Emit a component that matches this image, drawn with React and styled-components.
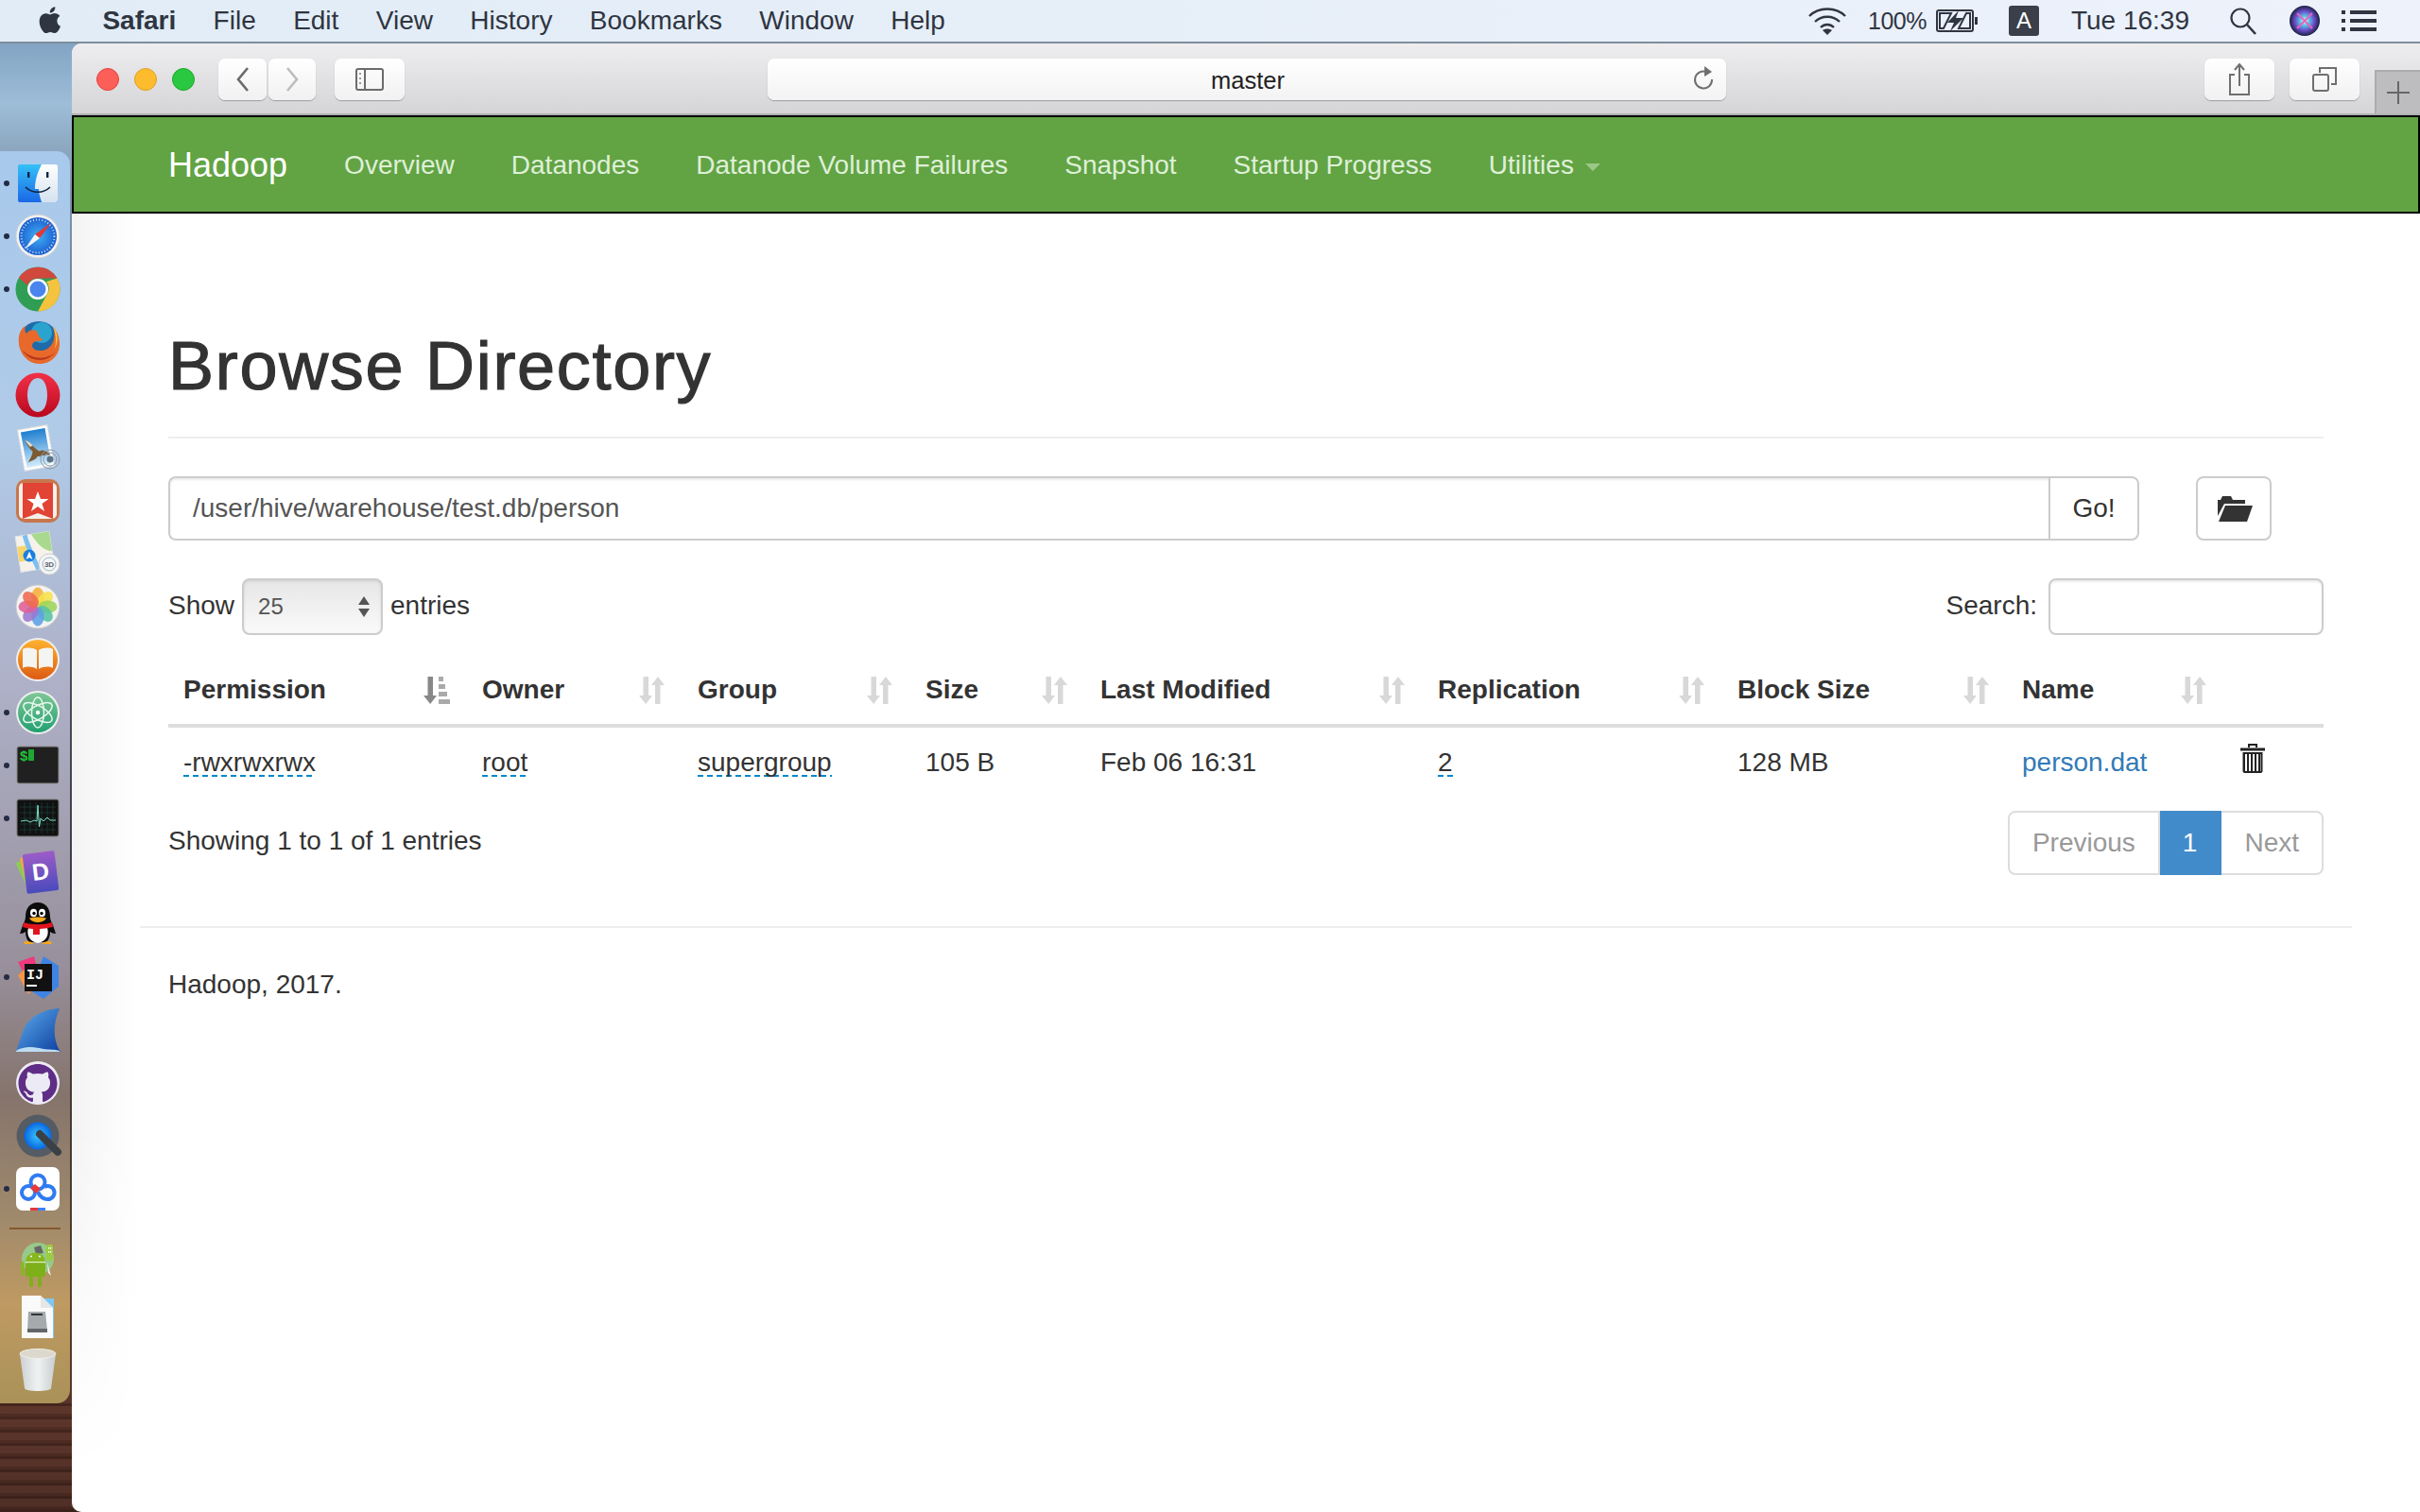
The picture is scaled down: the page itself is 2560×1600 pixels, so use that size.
import React from "react";
import styled, { createGlobalStyle } from "styled-components";

const Global = createGlobalStyle`
  html, body { margin: 0; padding: 0; background: #fff; }
  * { box-sizing: border-box; }
  body { font-family: "Liberation Sans", Arial, sans-serif; font-size: 28px; line-height: 40px; color: #333; }
`;

const Desktop = styled.div`
  width: 2560px; height: 1600px; overflow: hidden; display: flex; flex-direction: column;
  background:
    repeating-linear-gradient(180deg, rgba(30,12,8,.35) 0 3px, rgba(120,70,55,.12) 3px 11px, rgba(50,22,16,.22) 11px 14px) left bottom / 100% 115px no-repeat,
    linear-gradient(180deg, #6f93b4 0, #9dbdd8 110px, #7e94ab 200px, #4a4d5a 700px, #3c3640 1000px, #4b3c2e 1250px, #5a3429 1480px, #4a2c24 1600px);
`;
const MenuBar = styled.header`
  height: 46px; flex: none; display: flex; align-items: center; justify-content: space-between;
  padding: 0 46px 0 40px; color: #2f3541; background: linear-gradient(90deg, #e1ecf6, #edf2fb);
  border-bottom: 2px solid #7f8e9c; font-size: 28px; line-height: 44px;
`;
const MenuGroup = styled.nav`display: flex; align-items: center; gap: 39.4px;`;
const AppleWrap = styled.span`display: flex; margin-right: -1px; width: 30px; margin-top: -2px;`;
const MenuItem = styled.span`font-weight: ${p => (p.$bold ? 700 : 400)};`;
const StatusGroup = styled.div`display: flex; align-items: center;`;
const StatusText = styled.span`margin-left: ${p => p.$left}px; white-space: nowrap;`;
const BatteryText = styled.span`margin-left: 22px; white-space: nowrap; font-size: 25px; letter-spacing: -0.5px;`;
const StatusIcon = styled.svg`margin-left: ${p => p.$left}px; display: block; flex: none;`;
const InputBadge = styled.span`
  margin-left: 31px; width: 32px; height: 32px; border-radius: 3px; background: #3a3f49; color: #fff;
  font-size: 24px; line-height: 32px; text-align: center;
`;
const Body = styled.div`flex: 1; display: flex; min-height: 0;`;
const DockColumn = styled.div`width: 76px; flex: none; padding-top: 114px;`;
const Dock = styled.aside`
  width: 74px; height: 1325px; padding-top: 6px; border-radius: 0 14px 14px 0;
  background: linear-gradient(180deg, #a8c9ec 0, #b0cbe8 300px, #aeb1c8 560px, #98909c 860px, #85746c 1000px, #a08a6c 1130px, #bf9a62 1220px, #a99258 1325px);
`;
const DockItem = styled.div`
  position: relative; height: 56px; display: flex; align-items: center; justify-content: center; padding-left: 6px;
  &::before {
    content: ""; display: ${p => (p.$running ? "block" : "none")}; position: absolute; left: 4px; top: 25px;
    width: 6px; height: 6px; border-radius: 50%; background: #232c44;
  }
`;
const DockDivider = styled.div`height: 2px; margin: 13px 10px 9px 10px; background: #83592f;`;

const Browser = styled.main`
  flex: 1; min-width: 0; display: flex; flex-direction: column; margin-top: 0;
  border-radius: 10px 0 0 10px; overflow: hidden; background: #fff;
`;
const Toolbar = styled.div`
  height: 76px; flex: none; display: flex; padding: 16px 0 0 26px;
  background: linear-gradient(180deg, #eeedef, #d5d4d7); border-bottom: 2px solid #b2b1b3;
`;
const Lights = styled.div`display: flex; gap: 16px; align-items: center; height: 44px; margin-right: 25px;`;
const Light = styled.span`
  width: 24px; height: 24px; border-radius: 50%; background: ${p => p.$color}; border: 1px solid ${p => p.$edge};
`;
const ToolButton = styled.div`
  width: ${p => p.$w}px; height: 44px; margin-left: ${p => p.$left || 0}px; flex: none;
  display: flex; align-items: center; justify-content: center; border-radius: 7px;
  background: linear-gradient(180deg, #fff, #f1f1f1); box-shadow: 0 1px 1px rgba(0,0,0,.28);
`;
const Address = styled.div`
  width: 1014px; height: 44px; margin-left: 384px; flex: none; margin-right: auto; padding: 0 12px 0 0;
  display: flex; align-items: center; justify-content: flex-end; position: relative; border-radius: 7px;
  background: linear-gradient(180deg, #fff, #f3f3f3); box-shadow: 0 1px 1px rgba(0,0,0,.28);
`;
const AddressText = styled.span`
  position: absolute; left: 2px; right: 0; top: 1px; text-align: center; font-size: 25.5px; color: #222; line-height: 44px;
`;
const NewTab = styled.div`
  width: 48px; height: 46px; margin: 12px 0 0 16px; flex: none; display: flex; align-items: center; justify-content: center;
  background: #bdbcbf; border-left: 2px solid #acabae; border-top: 2px solid #acabae;
`;
const Navbar = styled.nav`
  height: 104px; flex: none; display: flex; align-items: center; padding: 2px 0 0 100px; gap: 60px;
  background: #62a344; border: 2px solid #000;
`;
const Brand = styled.span`font-size: 36px; color: #fff;`;
const NavLink = styled.span`color: #dff0d8; font-size: 28px; display: flex; align-items: center;`;
const Caret = styled.span`
  margin-left: 12px; margin-top: 4px; width: 0; height: 0; border-left: 8px solid transparent; border-right: 8px solid transparent;
  border-top: 8px solid #9cc886;
`;
const Page = styled.div`
  flex: 1; padding: 0 102px; position: relative;
  &::before {
    content: ""; position: absolute; left: 0; top: 0; bottom: 0; width: 70px; pointer-events: none;
    background: linear-gradient(90deg, #f3f3f3, #fff);
    -webkit-mask-image: linear-gradient(180deg, #000 70%, transparent 97%);
  }
`;
const Content = styled.div`position: relative;`;
const Title = styled.h1`
  margin: 121px 0 0; padding-bottom: 35px; border-bottom: 2px solid #eee; font-size: 72px; line-height: 80px; font-weight: 400; color: #333;
  letter-spacing: 1.7px; -webkit-text-stroke: 1.2px #333;
`;
const PathRow = styled.div`display: flex; margin-top: 40px; height: 68px;`;
const PathInput = styled.input`
  flex: 1; min-width: 0; height: 68px; padding: 0 24px; border: 2px solid #ccc; border-right: 0; border-radius: 8px 0 0 8px;
  font: 28px "Liberation Sans", Arial, sans-serif; color: #555; outline: none; box-shadow: inset 0 2px 2px rgba(0,0,0,.075); background: #fff;
`;
const GoButton = styled.div`
  width: 96px; height: 68px; flex: none; border: 2px solid #ccc; border-radius: 0 8px 8px 0; display: flex; align-items: center; justify-content: center;
`;
const FolderButton = styled.div`
  width: 80px; height: 68px; margin-left: 60px; margin-right: 55px; flex: none; border: 2px solid #ccc; border-radius: 8px; padding-left: 3px;
  display: flex; align-items: center; justify-content: center;
`;
const FilterRow = styled.div`display: flex; justify-content: space-between; margin-top: 40px; height: 60px; align-items: center;`;
const FilterGroup = styled.div`display: flex; align-items: center; gap: ${p => p.$gap}px;`;
const FilterLabel = styled.span`margin-top: -2px;`;
const SelectBox = styled.div`
  width: 149px; height: 60px; padding: 0 12px 0 15px; border: 2px solid #ccc; border-radius: 8px; display: flex; align-items: center; justify-content: space-between;
  background: linear-gradient(180deg, #e6e6e6, #fafafa); color: #555; font-size: 24px; box-shadow: inset 0 1px 3px rgba(0,0,0,.1);
`;
const SearchBox = styled.input`
  width: 291px; height: 60px; border: 2px solid #ccc; border-radius: 8px; outline: none; box-shadow: inset 0 2px 2px rgba(0,0,0,.075); background: #fff;
`;
const Table = styled.table`width: 2280px; border-spacing: 0; table-layout: fixed;`;
const Th = styled.th`
  padding: 38px 18px 16px 16px; border-bottom: 4px solid #ddd; text-align: left; font-weight: 700; font-size: 28px; line-height: 40px;
`;
const ThInner = styled.div`display: flex; align-items: center; justify-content: space-between;`;
const Td = styled.td`padding: 17px 16px 15px; font-size: 28px; line-height: 40px; vertical-align: top;`;
const TrashCell = styled.td`padding: 17px 0 0 17px; vertical-align: top;`;
const Dotted = styled.span`
  background: repeating-linear-gradient(90deg, #0088cc 0 6px, transparent 6px 10px) left bottom / 100% 2px no-repeat;
`;
const FileLink = styled.span`color: #337ab7;`;
const InfoRow = styled.div`display: flex; justify-content: space-between; align-items: flex-start; margin-top: 16px;`;
const Info = styled.div`margin-top: 12px;`;
const Pager = styled.div`display: flex; height: 68px;`;
const PageCell = styled.div`
  height: 68px; padding: 0 ${p => p.$pad}px; display: flex; align-items: center; color: ${p => (p.$active ? "#fff" : "#999")};
  background: ${p => (p.$active ? "#428bca" : "#fff")}; border: 2px solid ${p => (p.$active ? "#428bca" : "#ddd")};
  border-left-width: ${p => (p.$first ? 2 : 0)}px; border-radius: ${p => p.$radius || 0};
`;
const FooterRule = styled.hr`margin: 54px -30px 0; height: 2px; border: 0; background: #eee;`;
const Footer = styled.p`margin: 40px 0 0;`;

const Glyph = ({ children, size = 48, box = 48 }) => (
  <svg width={size} height={size} viewBox={`0 0 ${box} ${box}`} style={{ display: "block", overflow: "visible" }}>{children}</svg>
);

const Finder = () => (
  <Glyph>
    <defs>
      <linearGradient id="fb" x1="0" y1="0" x2="0" y2="1"><stop offset="0" stopColor="#35c0f8" /><stop offset="1" stopColor="#1a68e6" /></linearGradient>
      <linearGradient id="fw" x1="0" y1="0" x2="0" y2="1"><stop offset="0" stopColor="#fff" /><stop offset="1" stopColor="#d5e2ef" /></linearGradient>
    </defs>
    <rect x="3" y="4" width="42" height="40" rx="2" fill="url(#fb)" />
    <path d="M28 4 H43 a2 2 0 0 1 2 2 V42 a2 2 0 0 1 -2 2 H28 C26 38 25 34 25 30 H21 C21 20 24 12 28 4Z" fill="url(#fw)" />
    <rect x="13" y="12" width="2.4" height="6" fill="#10243f" /><rect x="33" y="12" width="2.4" height="6" fill="#10243f" />
    <path d="M11 28 C18 35 30 35 37 28" stroke="#10243f" strokeWidth="1.6" fill="none" />
  </Glyph>
);
const Safari = () => (
  <Glyph>
    <defs><radialGradient id="sa"><stop offset="0" stopColor="#3fb0f5" /><stop offset="1" stopColor="#1c5fcf" /></radialGradient></defs>
    <circle cx="24" cy="24" r="23" fill="#f2f2f2" stroke="#cfcfcf" />
    <circle cx="24" cy="24" r="20" fill="url(#sa)" />
    <circle cx="24" cy="24" r="17.5" fill="none" stroke="#cfe4fa" strokeWidth="2" strokeDasharray="1 2.2" />
    <path d="M38 10 L21 22 L26 26Z" fill="#e8362f" /><path d="M10 38 L21 22 L26 26Z" fill="#f5f5f5" />
  </Glyph>
);
const Chrome = () => (
  <Glyph>
    <circle cx="24" cy="24" r="23.5" fill="#2f9e54" />
    <path d="M4 12 A23.5 23.5 0 0 1 44.5 12.5 L24 12.5 A11.5 11.5 0 0 0 13 20Z" fill="#d1483d" />
    <path d="M44.5 12.5 A23.5 23.5 0 0 1 24 47.5 L34 29 A11.5 11.5 0 0 0 33 16Z M24 12.5 H44.5" fill="#f5c33e" />
    <circle cx="24" cy="24" r="11" fill="#fff" /><circle cx="24" cy="24" r="8.5" fill="#4a84ee" />
  </Glyph>
);
const Firefox = () => (
  <Glyph>
    <circle cx="25" cy="23" r="21" fill="#1f6aa8" />
    <circle cx="28" cy="14" r="11" fill="#2ba3cf" />
    <path d="M4 18 C2 34 12 47 26 47 C38 47 47 38 47 26 C47 18 44 12 40 8 C44 18 40 32 28 33 C20 34 15 28 20 24 C24 22 28 24 29 21 C25 19 24 15 23 12 C17 10 14 12 12 15 C10 13 10 10 11 7 C7 9 5 13 4 18Z" fill="#e8692a" />
    <path d="M8 33 C14 44 33 48 43 34 C36 42 20 44 8 33Z" fill="#b8361c" />
    <path d="M40 8 C46 14 46 24 42 31 C44 22 43 15 40 8Z" fill="#f8c43c" />
  </Glyph>
);
const Opera = () => (
  <Glyph>
    <defs><linearGradient id="op" x1="0" y1="0" x2="0" y2="1"><stop offset="0" stopColor="#f33148" /><stop offset="1" stopColor="#b8081e" /></linearGradient></defs>
    <path fillRule="evenodd" d="M24 .5 A23.5 23.5 0 1 0 24 47.5 A23.5 23.5 0 1 0 24 .5Z M24 6 C31 6 34 15 34 24 C34 33 31 42 24 42 C17 42 13 33 13 24 C13 15 17 6 24 6Z" fill="url(#op)" />
  </Glyph>
);
const MailStamp = () => (
  <Glyph>
    <defs><linearGradient id="ms" x1="0" y1="0" x2="0" y2="1"><stop offset="0" stopColor="#1f7fd0" /><stop offset="1" stopColor="#d2ecfa" /></linearGradient></defs>
    <g transform="rotate(-10 22 24)">
      <rect x="6" y="2" width="32" height="44" fill="#fff" stroke="#d6d6d6" strokeWidth="1.5" strokeDasharray="2 1.6" />
      <rect x="9" y="5" width="26" height="38" fill="url(#ms)" />
      <path d="M12 14 C18 18 20 24 25 28 C29 26 34 30 36 34 C30 32 26 34 22 33 C20 37 15 36 11 38 C14 34 17 31 18 27 C15 23 13 19 12 14Z" fill="#7c5a32" />
      <path d="M12 14 C15 15 18 18 19 21 L16 22Z" fill="#e0dcc8" />
    </g>
    <circle cx="37" cy="36" r="10" fill="none" stroke="#8c9aa8" strokeWidth="1" /><circle cx="37" cy="36" r="7" fill="none" stroke="#8c9aa8" strokeWidth="1" />
    <circle cx="37" cy="36" r="3.5" fill="#5e7286" />
  </Glyph>
);
const Wunderlist = () => (
  <Glyph>
    <rect x="1" y="1" width="46" height="46" rx="10" fill="#c8764c" />
    <rect x="4" y="5" width="40" height="38" rx="5" fill="#f4efe8" />
    <path d="M8 5 H40 V43 L24 37 L8 43Z" fill="#e14334" />
    <path d="M24 14 L27 22 L35.5 22 L28.5 27 L31 35 L24 30 L17 35 L19.5 27 L12.5 22 L21 22Z" fill="#fff" />
  </Glyph>
);
const MapsIcon = () => (
  <Glyph>
    <g transform="rotate(-9 20 22)">
      <rect x="3" y="3" width="36" height="38" fill="#f6f2ea" stroke="#e5e5e5" />
      <path d="M20 3 H39 V24 C31 23 25 15 20 3Z" fill="#a9d98e" />
      <path d="M3 14 H13 V30 H3Z" fill="#f6d56a" />
      <path d="M13 3 C14 14 18 28 22 41" stroke="#7cc0f2" strokeWidth="5" fill="none" />
    </g>
    <circle cx="15" cy="26" r="6.5" fill="#1a7fe0" /><path d="M15 21.5 L18.5 30 L15 28 L11.5 30Z" fill="#fff" />
    <circle cx="36" cy="35" r="11" fill="#f5f5f5" stroke="#cfcfcf" />
    <circle cx="36" cy="35" r="7" fill="none" stroke="#9ab8c8" />
    <text x="36" y="38" textAnchor="middle" fontSize="8" fontWeight="700" fontFamily="Liberation Sans" fill="#5a6570">3D</text>
  </Glyph>
);
const Photos = () => (
  <Glyph>
    <circle cx="24" cy="24" r="23" fill="#f2f2f2" stroke="#c9c9c9" />
    {["#f6b03b", "#f8e04a", "#9cd45a", "#55c3a4", "#5c9fe6", "#9a78cf", "#de5e98", "#ee6a50"].map((c, i) => (
      <ellipse key={c} cx="24" cy="13.5" rx="6.6" ry="10" fill={c} fillOpacity=".88" transform={`rotate(${i * 45} 24 24)`} />
    ))}
  </Glyph>
);
const Books = () => (
  <Glyph>
    <defs><linearGradient id="bk" x1="0" y1="0" x2="0" y2="1"><stop offset="0" stopColor="#fdb22e" /><stop offset="1" stopColor="#dd5b13" /></linearGradient></defs>
    <circle cx="24" cy="24" r="23" fill="#efefef" /><circle cx="24" cy="24" r="21" fill="url(#bk)" />
    <path d="M23 14 C18 11 12 11 8 13 V33 C12 31 18 31 23 34Z M25 14 C30 11 36 11 40 13 V33 C36 31 30 31 25 34Z" fill="#f4f4f2" />
  </Glyph>
);
const Atom = () => (
  <Glyph>
    <defs><linearGradient id="at" x1="0" y1="0" x2="0" y2="1"><stop offset="0" stopColor="#7fc796" /><stop offset="1" stopColor="#22a071" /></linearGradient></defs>
    <circle cx="24" cy="24" r="23" fill="#efefef" /><circle cx="24" cy="24" r="21" fill="url(#at)" />
    <g fill="none" stroke="#e8f8ee" strokeWidth="1.5">
      <ellipse cx="24" cy="24" rx="17" ry="7" transform="rotate(30 24 24)" />
      <ellipse cx="24" cy="24" rx="17" ry="7" transform="rotate(-30 24 24)" />
      <ellipse cx="24" cy="24" rx="16" ry="6.5" transform="rotate(90 24 24)" />
    </g>
    <circle cx="24" cy="24" r="2.2" fill="#fff" />
  </Glyph>
);
const Terminal = () => (
  <Glyph>
    <rect x="2" y="4" width="44" height="39" rx="2" fill="#202020" stroke="#8a8a8a" />
    <text x="5" y="19" fontSize="15" fontWeight="700" fontFamily="Liberation Sans" fill="#22c43a">$</text>
    <rect x="14" y="7" width="6" height="12" fill="#1fa833" />
  </Glyph>
);
const Activity = () => (
  <Glyph>
    <rect x="2" y="4" width="44" height="39" rx="2" fill="#111" stroke="#777" />
    <g stroke="#1f4a42" strokeWidth=".6">
      {[10, 16, 22, 28, 34, 40].map(x => <line key={x} x1={x} y1="7" x2={x} y2="40" />)}
      {[12, 18, 24, 30, 36].map(y => <line key={y} x1="5" y1={y} x2="43" y2={y} />)}
    </g>
    <path d="M6 27 L12 26 L16 28 L20 26 L23 27 L24 10 L25.5 33 L27 24 L30 27 L34 23 L37 26 L43 26" stroke="#7fe0cc" strokeWidth="1" fill="none" />
  </Glyph>
);
const Dash = () => (
  <Glyph>
    <rect x="6" y="8" width="26" height="32" rx="2" fill="#8ccc55" transform="rotate(-26 19 24)" />
    <rect x="9" y="6" width="27" height="34" rx="2" fill="#f2a44e" transform="rotate(-16 22 24)" />
    <defs><linearGradient id="da" x1="0" y1="0" x2="0" y2="1"><stop offset="0" stopColor="#9c5cc8" /><stop offset="1" stopColor="#4a4bbc" /></linearGradient></defs>
    <rect x="10" y="4" width="34" height="42" rx="2" fill="url(#da)" transform="rotate(-7 27 25)" />
    <text x="27" y="33" textAnchor="middle" fontSize="25" fontWeight="700" fontFamily="Liberation Sans" fill="#fff" transform="rotate(-7 27 25)">D</text>
  </Glyph>
);
const QQ = () => (
  <Glyph>
    <path d="M24 1 C33 1 37 8 37 16 C37 20 39 22 40 25 L43 34 C40 34 39 33 37 32 C37 38 35 41 33 43 H15 C13 41 11 38 11 32 C9 33 8 34 5 34 L8 25 C9 22 11 20 11 16 C11 8 15 1 24 1Z" fill="#0c0c0c" />
    <path d="M14 28 H34 C36 34 34 42 24 44 C14 42 12 34 14 28Z" fill="#fafafa" />
    <ellipse cx="19.5" cy="12" rx="3.5" ry="4.2" fill="#fff" /><ellipse cx="28.5" cy="12" rx="3.5" ry="4.2" fill="#fff" />
    <circle cx="20" cy="12.5" r="1.7" fill="#000" /><circle cx="28" cy="12.5" r="1.7" fill="#000" />
    <path d="M15 17.5 C20 16 28 16 33 17.5 C31 21 27 22 24 22 C21 22 17 21 15 17.5Z" fill="#f4a81c" />
    <path d="M9 22 C17 25 31 25 39 22 L40 27 C34 28 29 29 26 29 V35 H19 V29 C16 29 12 28 8 27Z" fill="#e1141d" />
    <path d="M9 43 C12 41 17 42 20 45 H10Z M39 43 C36 41 31 42 28 45 H38Z" fill="#f4a81c" />
  </Glyph>
);
const Idea = () => (
  <Glyph>
    <path d="M20 2 L3 8 L12 26 L4 22 L14 40 L28 32Z" fill="#ee3a7c" />
    <path d="M3 22 L14 12 L20 36 L14 42Z" fill="#f69447" />
    <path d="M30 2 L46 12 L46 34 L30 47 L16 38Z" fill="#3f83e4" />
    <path d="M14 40 L22 26 L26 34Z" fill="#9d4db8" />
    <rect x="10" y="10" width="29" height="29" fill="#111" />
    <text x="12" y="26" fontSize="15" fontWeight="700" fontFamily="Liberation Mono" fill="#fff">IJ</text>
    <rect x="12" y="32" width="11" height="2" fill="#fff" />
  </Glyph>
);
const Wireshark = () => (
  <Glyph>
    <defs><linearGradient id="ws" x1="0" y1="0" x2="1" y2="1"><stop offset="0" stopColor="#5fb0f2" /><stop offset="1" stopColor="#0d3f9e" /></linearGradient></defs>
    <path d="M47 1 C30 2 14 10 9 24 C6 32 3 40 1 47 H48 C42 38 38 22 47 1Z" fill="url(#ws)" />
    <path d="M1 46 C10 40 22 42 30 44 C36 45 42 44 47 46 V47 H1Z" fill="#bcdcf2" />
  </Glyph>
);
const GitHubDesktop = () => (
  <Glyph>
    <circle cx="24" cy="24" r="23" fill="#eceaf4" />
    <g transform="translate(3.5 3.5) scale(1.71)">
      <path fill="#5f2d85" d="M12 .297c-6.63 0-12 5.373-12 12 0 5.303 3.438 9.8 8.205 11.385.6.113.82-.258.82-.577 0-.285-.01-1.04-.015-2.04-3.338.724-4.042-1.61-4.042-1.61C4.422 18.07 3.633 17.7 3.633 17.7c-1.087-.744.084-.729.084-.729 1.205.084 1.838 1.236 1.838 1.236 1.07 1.835 2.809 1.305 3.495.998.108-.776.417-1.305.76-1.605-2.665-.3-5.466-1.332-5.466-5.93 0-1.31.465-2.38 1.235-3.22-.135-.303-.54-1.523.105-3.176 0 0 1.005-.322 3.3 1.23.96-.267 1.98-.399 3-.405 1.02.006 2.04.138 3 .405 2.28-1.552 3.285-1.23 3.285-1.23.645 1.653.24 2.873.12 3.176.765.84 1.23 1.91 1.23 3.22 0 4.61-2.805 5.625-5.475 5.92.42.36.81 1.096.81 2.22 0 1.606-.015 2.896-.015 3.286 0 .315.21.69.825.57C20.565 22.092 24 17.592 24 12.297c0-6.627-5.373-12-12-12" />
    </g>
  </Glyph>
);
const QuickTime = () => (
  <Glyph>
    <defs><radialGradient id="qt"><stop offset="0" stopColor="#38c8ff" /><stop offset="1" stopColor="#0a66e0" /></radialGradient></defs>
    <circle cx="24" cy="24" r="22.5" fill="#555b63" /><circle cx="24" cy="24" r="14.5" fill="url(#qt)" />
    <path d="M26 22 L45 41" stroke="#3b4046" strokeWidth="8" strokeLinecap="round" />
  </Glyph>
);
const BaiduCloud = () => (
  <Glyph>
    <rect x="1" y="1" width="46" height="46" rx="7" fill="#fff" />
    <g fill="none" stroke="#2f7bf0" strokeWidth="4">
      <circle cx="24" cy="17" r="7.5" /><circle cx="14" cy="28" r="7" /><path d="M24 27 C26 33 31 35 34 35 A7 7 0 1 0 31 22" />
    </g>
    <path d="M21 19 L27 24 L22 29 L16 23Z" fill="#e53a3a" />
    <rect x="16" y="44" width="8" height="3" fill="#e53a3a" /><rect x="24" y="44" width="8" height="3" fill="#3b82f0" />
  </Glyph>
);
const AndroidTool = () => (
  <Glyph>
    <circle cx="24" cy="18" r="17" fill="#97c98a" />
    <path d="M20 6 L27 4 L30 12 L22 13Z" fill="#666" />
    <rect x="33" y="3" width="7" height="17" rx="2" fill="#9ccc40" />
    <g fill="#fff"><rect x="35" y="6" width="1.2" height="1.6" /><rect x="37" y="6" width="1.2" height="1.6" /><rect x="35" y="10" width="1.2" height="1.6" /><rect x="37" y="10" width="1.2" height="1.6" /></g>
    <path d="M11 21 A10.500 9.500 0 0 1 32 21Z" fill="#86b81e" />
    <rect x="11" y="22" width="21" height="15" rx="2" fill="#7eb01a" />
    <rect x="11" y="21" width="21" height="1.200" fill="#e4eecc" />
    <rect x="6" y="21" width="3.500" height="15" rx="1.700" fill="#86b81e" />
    <path d="M34 22 L38 36 L35 33Z" fill="#f0f0e8" />
    <rect x="15" y="36" width="4" height="12" rx="2" fill="#7eb01a" /><rect x="24" y="36" width="4" height="12" rx="2" fill="#7eb01a" />
    <circle cx="17" cy="15.500" r="1" fill="#fff" /><circle cx="26" cy="15.500" r="1" fill="#fff" />
  </Glyph>
);
const DiskDoc = () => (
  <Glyph>
    <path d="M12 4 H41 V46 H12Z" fill="#7bc8f4" />
    <path d="M7 1 H27 L40 14 V46 H7Z" fill="#fafafa" /><path d="M27 1 L40 14 H27Z" fill="#e6e6e6" />
    <path d="M14 18 H32 L34 38 H13Z" fill="#a6aaac" /><rect x="13" y="36" width="21" height="4" fill="#62666a" />
    <rect x="17" y="20" width="12" height="2" fill="#333" />
  </Glyph>
);
const Bin = () => (
  <Glyph>
    <defs><linearGradient id="bn" x1="0" y1="0" x2="1" y2="0"><stop offset="0" stopColor="#ccd0d2" /><stop offset=".5" stopColor="#f0f2f2" /><stop offset="1" stopColor="#c9cdd0" /></linearGradient></defs>
    <path d="M5 7 L10 43 C10 47 38 47 38 43 L43 7Z" fill="url(#bn)" />
    <ellipse cx="24" cy="6.5" rx="19" ry="5" fill="#dcd8ce" stroke="#f0eee8" />
  </Glyph>
);

const dockGroupA = [
  [Finder, 1], [Safari, 1], [Chrome, 1], [Firefox, 0], [Opera, 0], [MailStamp, 0], [Wunderlist, 0], [MapsIcon, 0], [Photos, 0], [Books, 0],
  [Atom, 1], [Terminal, 1], [Activity, 1], [Dash, 0], [QQ, 0], [Idea, 1], [Wireshark, 0], [GitHubDesktop, 0], [QuickTime, 0], [BaiduCloud, 1],
];
const dockGroupB = [AndroidTool, DiskDoc, Bin];

const SortIcon = ({ sorted }) => (
  <svg width="28" height="29" viewBox="0 0 28 29" style={{ display: "block", flex: "none" }}>
    <path d="M4.5 0 H10 V20 H14 L7.2 29 L0 20 H4.5Z" fill={sorted ? "#888" : "#d8d8d8"} />
    {sorted ? (
      <g fill="#aaa"><rect x="16" y="0" width="5" height="5" /><rect x="16" y="8" width="7" height="5" /><rect x="16" y="16" width="9" height="5" /><rect x="16" y="24" width="12" height="5" /></g>
    ) : (
      <path d="M17 29 H22.5 V9 H27 L20 0 L13 9 H17Z" fill="#d8d8d8" />
    )}
  </svg>
);
const FolderOpen = () => (
  <svg width="37" height="27" viewBox="0 0 37 27" style={{ display: "block" }}>
    <path d="M0 4 H3 L5 0 H14 L16 4 H29 V8 H7 L0 21Z" fill="#333" />
    <path d="M8 10 H37 L31 27 H1Z" fill="#333" />
  </svg>
);
const TrashGlyph = () => (
  <svg width="26" height="31" viewBox="0 0 26 31" style={{ display: "block" }}>
    <path d="M9 4 V1 H17 V4" stroke="#222" strokeWidth="2" fill="none" />
    <rect x="0" y="4.5" width="26" height="3" fill="#222" />
    <path fillRule="evenodd" d="M2.5 9 H23.5 V29 C23.5 30 22.5 31 21.5 31 H4.500 C3.500 31 2.500 30 2.500 29Z M5 11 V29 H7 V11Z M9 11 V29 H11 V11Z M13 11 V29 H15 V11Z M17 11 V29 H19 V11Z M21 11 V29 H21.500 V11Z" fill="#222" />
  </svg>
);

const columns = [
  ["Permission", 316, true], ["Owner", 228], ["Group", 241], ["Size", 185], ["Last Modified", 357], ["Replication", 317], ["Block Size", 301], ["Name", 230],
];

export default function App() {
  return (
    <Desktop>
      <Global />
      <MenuBar>
        <MenuGroup>
          <AppleWrap>
            <svg width="28" height="32" viewBox="0 0 24 28"><path fill="#2f3541" d="M17.6 14.9c0-3 2.500-4.500 2.600-4.500-1.400-2.100-3.600-2.400-4.400-2.400-1.900-.2-3.700 1.100-4.600 1.100-1 0-2.400-1.100-4-1-2 0-3.900 1.200-5 3-2.100 3.700-.5 9.200 1.500 12.200 1 1.500 2.200 3.100 3.800 3 1.500-.1 2.100-1 3.900-1s2.400 1 4 1 2.700-1.500 3.700-2.900c1.200-1.700 1.600-3.300 1.700-3.400-.1 0-3.200-1.200-3.200-5.100zM14.600 5.900c.8-1 1.400-2.400 1.200-3.900-1.200 0-2.700.8-3.600 1.800-.8.900-1.500 2.300-1.300 3.700 1.400.1 2.800-.7 3.700-1.600z" /></svg>
          </AppleWrap>
          <MenuItem $bold>Safari</MenuItem>
          {["File", "Edit", "View", "History", "Bookmarks", "Window", "Help"].map(m => <MenuItem key={m}>{m}</MenuItem>)}
        </MenuGroup>
        <StatusGroup>
          <StatusIcon $left={0} width="42" height="30" viewBox="0 0 42 30">
            <g fill="none" stroke="#2f3541" strokeWidth="2.400"><path d="M2 10 C12 0 30 0 40 10" /><path d="M8 16 C15 9 27 9 34 16" /><path d="M14 22 C18 18 24 18 28 22" /></g>
            <path d="M21 30 L16 25 C19 23 23 23 26 25Z" fill="#2f3541" />
          </StatusIcon>
          <BatteryText>100%</BatteryText>
          <StatusIcon $left={10} width="46" height="24" viewBox="0 0 46 24">
            <rect x="1" y="1" width="38" height="22" rx="2" fill="none" stroke="#2f3541" strokeWidth="2" />
            <rect x="41" y="8" width="3" height="8" fill="#2f3541" />
            <path d="M4 4 H16 L8 20 H4Z M36 4 V20 H24 L32 4Z" fill="none" stroke="#2f3541" strokeWidth="2" />
            <path d="M24 1 L12 14 H19 L15 23 L29 9 H21Z" fill="#2f3541" />
          </StatusIcon>
          <InputBadge>A</InputBadge>
          <StatusText $left={34}>Tue 16:39</StatusText>
          <StatusIcon $left={42} width="30" height="30" viewBox="0 0 30 30">
            <circle cx="12" cy="12" r="9.500" fill="none" stroke="#2f3541" strokeWidth="2.200" /><path d="M19 19 L28 29" stroke="#2f3541" strokeWidth="2.600" />
          </StatusIcon>
          <StatusIcon $left={34} width="32" height="32" viewBox="0 0 32 32">
            <defs><radialGradient id="si"><stop offset="0" stopColor="#fff" /><stop offset=".3" stopColor="#58c6e8" /><stop offset=".65" stopColor="#6a4bc8" /><stop offset="1" stopColor="#1b2140" /></radialGradient></defs>
            <circle cx="16" cy="16" r="16" fill="url(#si)" />
            <path d="M8 8 L24 24 M24 8 L8 24" stroke="#e566b8" strokeWidth="2" />
          </StatusIcon>
          <StatusIcon $left={23} width="37" height="22" viewBox="0 0 37 22">
            <g fill="#2f3541"><rect x="0" y="0" width="4" height="4" /><rect x="9" y="0" width="28" height="4" /><rect x="0" y="9" width="4" height="4" /><rect x="9" y="9" width="28" height="4" /><rect x="0" y="18" width="4" height="4" /><rect x="9" y="18" width="28" height="4" /></g>
          </StatusIcon>
        </StatusGroup>
      </MenuBar>
      <Body>
        <DockColumn>
          <Dock>
            {dockGroupA.map(([Icon, running], i) => (
              <DockItem key={i} $running={!!running}><Icon /></DockItem>
            ))}
            <DockDivider />
            {dockGroupB.map((Icon, i) => <DockItem key={i}><Icon /></DockItem>)}
          </Dock>
        </DockColumn>
        <Browser>
          <Toolbar>
            <Lights>
              <Light $color="#fc5f57" $edge="#e0443e" />
              <Light $color="#fdbc2e" $edge="#dea123" />
              <Light $color="#2ac840" $edge="#1aab29" />
            </Lights>
            <ToolButton $w={51}>
              <svg width="16" height="28" viewBox="0 0 16 28"><path d="M13 2 L3 14 L13 26" fill="none" stroke="#6b6b6b" strokeWidth="2.600" /></svg>
            </ToolButton>
            <ToolButton $w={50} $left={2}>
              <svg width="16" height="28" viewBox="0 0 16 28"><path d="M3 2 L13 14 L3 26" fill="none" stroke="#bdbdbd" strokeWidth="2.600" /></svg>
            </ToolButton>
            <ToolButton $w={74} $left={20}>
              <svg width="30" height="24" viewBox="0 0 30 24"><rect x="1" y="1" width="28" height="22" rx="2" fill="none" stroke="#6b6b6b" strokeWidth="2" /><rect x="9" y="1" width="2" height="22" fill="#6b6b6b" /><g fill="#999"><rect x="4" y="5" width="2" height="2" /><rect x="4" y="10" width="2" height="2" /><rect x="4" y="15" width="2" height="2" /></g></svg>
            </ToolButton>
            <Address>
              <AddressText>master</AddressText>
              <svg width="24" height="28" viewBox="0 0 24 28" style={{ position: "relative" }}><path d="M15 6 A9 9 0 1 0 21 14" fill="none" stroke="#6f6f6f" strokeWidth="2" /><path d="M13 0 L21 6 L13 11Z" fill="#6f6f6f" /></svg>
            </Address>
            <ToolButton $w={74}>
              <svg width="24" height="34" viewBox="0 0 24 34"><path d="M7 12 H2 V33 H22 V12 H17 M12 24 V2 M7 7 L12 1 L17 7" fill="none" stroke="#6f6f6f" strokeWidth="2" /></svg>
            </ToolButton>
            <ToolButton $w={74} $left={16}>
              <svg width="26" height="26" viewBox="0 0 26 26"><rect x="1" y="8" width="16" height="17" rx="2" fill="none" stroke="#6f6f6f" strokeWidth="2" /><path d="M8 6 V1 H25 V18 H20" fill="none" stroke="#6f6f6f" strokeWidth="2" /></svg>
            </ToolButton>
            <NewTab>
              <svg width="24" height="24" viewBox="0 0 24 24"><path d="M12 0 V24 M0 12 H24" stroke="#666" strokeWidth="2" /></svg>
            </NewTab>
          </Toolbar>
          <Navbar>
            <Brand>Hadoop</Brand>
            {["Overview", "Datanodes", "Datanode Volume Failures", "Snapshot", "Startup Progress"].map(n => <NavLink key={n}>{n}</NavLink>)}
            <NavLink>Utilities<Caret /></NavLink>
          </Navbar>
          <Page>
            <Content>
              <Title>Browse Directory</Title>
              <PathRow>
                <PathInput readOnly value="/user/hive/warehouse/test.db/person" />
                <GoButton>Go!</GoButton>
                <FolderButton><FolderOpen /></FolderButton>
              </PathRow>
              <FilterRow>
                <FilterGroup $gap={8}>
                  <FilterLabel>Show</FilterLabel>
                  <SelectBox>
                    <span>25</span>
                    <svg width="12" height="22" viewBox="0 0 12 22"><path d="M6 0 L12 9 H0Z M6 22 L12 13 H0Z" fill="#555" /></svg>
                  </SelectBox>
                  <FilterLabel>entries</FilterLabel>
                </FilterGroup>
                <FilterGroup $gap={12}>
                  <FilterLabel>Search:</FilterLabel>
                  <SearchBox />
                </FilterGroup>
              </FilterRow>
              <Table>
                <colgroup>
                  {columns.map(c => <col key={c[0]} style={{ width: c[1] }} />)}
                  <col style={{ width: 105 }} />
                </colgroup>
                <thead>
                  <tr>
                    {columns.map(c => (
                      <Th key={c[0]}><ThInner>{c[0]}<SortIcon sorted={c[2]} /></ThInner></Th>
                    ))}
                    <Th />
                  </tr>
                </thead>
                <tbody>
                  <tr>
                    <Td><Dotted>-rwxrwxrwx</Dotted></Td>
                    <Td><Dotted>root</Dotted></Td>
                    <Td><Dotted>supergroup</Dotted></Td>
                    <Td>105 B</Td>
                    <Td>Feb 06 16:31</Td>
                    <Td><Dotted>2</Dotted></Td>
                    <Td>128 MB</Td>
                    <Td><FileLink>person.dat</FileLink></Td>
                    <TrashCell><TrashGlyph /></TrashCell>
                  </tr>
                </tbody>
              </Table>
              <InfoRow>
                <Info>Showing 1 to 1 of 1 entries</Info>
                <Pager>
                  <PageCell $pad={24} $first $radius="8px 0 0 8px">Previous</PageCell>
                  <PageCell $pad={24} $active>1</PageCell>
                  <PageCell $pad={24} $radius="0 8px 8px 0">Next</PageCell>
                </Pager>
              </InfoRow>
              <FooterRule />
              <Footer>Hadoop, 2017.</Footer>
            </Content>
          </Page>
        </Browser>
      </Body>
    </Desktop>
  );
}
